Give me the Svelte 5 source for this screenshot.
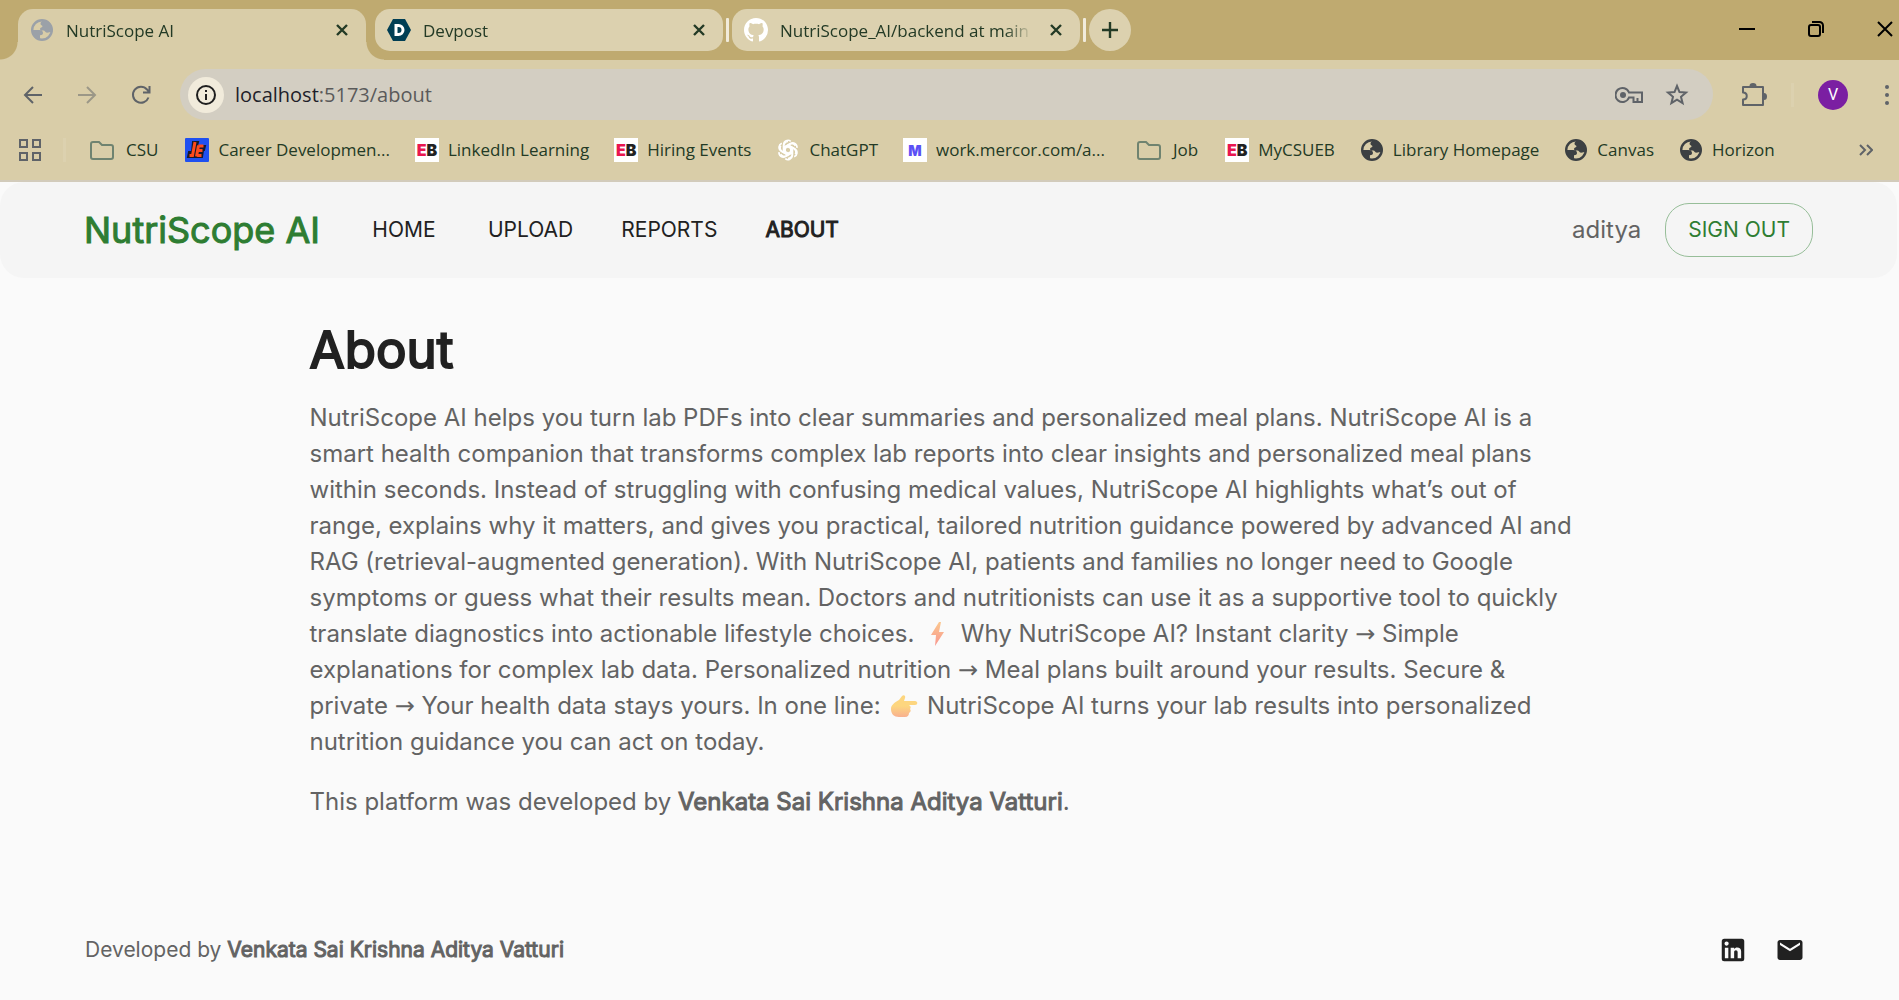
<script>
	const tabs = [
		{ title: 'NutriScope AI', icon: 'globe', active: true },
		{ title: 'Devpost', icon: 'devpost' },
		{ title: 'NutriScope_AI/backend at main', icon: 'github' }
	];

	const bookmarks = [
		{ label: 'CSU', icon: 'folder' },
		{ label: 'Career Developmen...', icon: 'career' },
		{ label: 'LinkedIn Learning', icon: 'eb' },
		{ label: 'Hiring Events', icon: 'eb' },
		{ label: 'ChatGPT', icon: 'chatgpt' },
		{ label: 'work.mercor.com/a...', icon: 'mercor' },
		{ label: 'Job', icon: 'folder' },
		{ label: 'MyCSUEB', icon: 'eb' },
		{ label: 'Library Homepage', icon: 'globe' },
		{ label: 'Canvas', icon: 'globe' },
		{ label: 'Horizon', icon: 'globe' }
	];

	const pages = ['Home', 'Upload', 'Reports', 'About'];
	const current = 'About';
	const author = 'Venkata Sai Krishna Aditya Vatturi';
</script>

{#snippet icon(name)}
	{#if name === 'globe'}
		<svg class="icon icon--globe" viewBox="0 0 24 24" aria-hidden="true">
			<circle cx="12" cy="12" r="9.8" fill="none" stroke="currentColor" stroke-width="2.4" />
			<path
				fill="currentColor"
				d="M14 2c-2 1-3.5 2-3.5 3.7 0 1.500 2 1.500 2 2.600 0 1.200-2.500 1-2.500 2.700 0 1.600 1.600 1.500 3.500 1.500 1.500 0 1.500 2.200 3.500 2.200 1.800 0 3-.7 5-.7C23 7 19.500 3 14 2zM2 12h7c2.500 0 4 1 4 3 0 1.800-1.300 2.200-3 2.200V21.500C5 20.500 2 17 2 12z"
			/>
		</svg>
	{:else if name === 'folder'}
		<svg class="icon icon--folder" viewBox="0 0 24 24" aria-hidden="true">
			<path
				d="M3 4h6l3 3h9a2 2 0 0 1 2 2v10a2 2 0 0 1-2 2H3a2 2 0 0 1-2-2V6a2 2 0 0 1 2-2z"
				fill="none"
				stroke="currentColor"
				stroke-width="2"
			/>
		</svg>
	{:else if name === 'devpost'}
		<svg class="icon" viewBox="0 0 24 24" aria-hidden="true">
			<path d="M6 1h12l6 11-6 11H6L0 12z" fill="#003e54" />
			<path d="M9 7.5v9h2.5a4.5 4.5 0 0 0 0-9z" fill="none" stroke="#fff" stroke-width="3" />
		</svg>
	{:else if name === 'github'}
		<svg class="icon" viewBox="0 0 16 16" aria-hidden="true">
			<path
				fill="#fff"
				d="M8 0C3.58 0 0 3.58 0 8c0 3.54 2.29 6.53 5.47 7.59.4.07.55-.17.55-.38 0-.19-.01-.82-.01-1.49-2.01.37-2.53-.49-2.69-.94-.09-.23-.48-.94-.82-1.13-.28-.15-.68-.52-.01-.53.63-.01 1.08.58 1.23.82.72 1.21 1.87.87 2.33.66.07-.52.28-.87.51-1.07-1.78-.2-3.64-.89-3.64-3.95 0-.87.31-1.59.82-2.15-.08-.2-.36-1.02.08-2.12 0 0 .67-.21 2.2.82.64-.18 1.32-.27 2-.27s1.36.09 2 .27c1.53-1.04 2.2-.82 2.2-.82.44 1.1.16 1.92.08 2.12.51.56.82 1.27.82 2.15 0 3.07-1.87 3.75-3.65 3.95.29.25.54.73.54 1.48 0 1.07-.01 1.93-.01 2.2 0 .21.15.46.55.38A8.01 8.01 0 0 0 16 8c0-4.42-3.58-8-8-8z"
			/>
		</svg>
	{:else if name === 'career'}
		<svg class="icon" viewBox="0 0 24 24" aria-hidden="true">
			<rect width="24" height="24" rx="1" fill="#1f50f0" />
			<path
				d="M8 4h5l-1 4h8l-1 4h-1l-1 7H3l1-5h3z"
				fill="#171a2b"
				stroke="#171a2b"
				stroke-width="2"
			/>
			<path
				d="M10 4 7.5 17.5H4.500M13.500 7.5 11.500 18.500M13.500 8h5M12.500 12.500h5M12 17.500h4.500"
				fill="none"
				stroke="#ff4a1c"
				stroke-width="3"
			/>
		</svg>
	{:else if name === 'eb'}
		<span class="icon eb" aria-hidden="true"><span class="eb__e">E</span>B</span>
	{:else if name === 'chatgpt'}
		<svg class="icon" viewBox="1 1 22 22" aria-hidden="true">
			<g fill="none" stroke="#fff" stroke-width="1.5">
				{#each [0, 60, 120, 180, 240, 300] as turn}
					<path
						d="M12 9 16 11.3V17a4 4 0 0 1-6.5 3M8.5 10l4-2.3 4.7 2.7a4 4 0 0 1 1.5 5.5"
						transform="rotate({turn} 12 12)"
					/>
				{/each}
			</g>
		</svg>
	{:else if name === 'mercor'}
		<span class="icon mercor" aria-hidden="true">M</span>
	{/if}
{/snippet}

<div class="browser">
	<div class="tabstrip">
		{#each tabs as tab}
			<div class="tab" class:tab--active={tab.active}>
				{@render icon(tab.icon)}
				<span class="tab__title">{tab.title}</span>
				<button class="tab__close" type="button" aria-label="Close {tab.title}">
					<svg viewBox="0 0 14 14" width="14" height="14" aria-hidden="true">
						<path d="m2 2 10 10M12 2 2 12" stroke="currentColor" stroke-width="2.4" />
					</svg>
				</button>
			</div>
			{#if !tab.active}<span class="tab-divider"></span>{/if}
		{/each}
		<button class="new-tab" type="button" aria-label="New tab">
			<svg viewBox="0 0 16 16" width="16" height="16" aria-hidden="true">
				<path d="M8 0v16M0 8h16" stroke="currentColor" stroke-width="2.4" />
			</svg>
		</button>
		<div class="window-controls">
			<button type="button" aria-label="Minimize">
				<svg viewBox="0 0 16 16" aria-hidden="true"><path d="M0 8h16" /></svg>
			</button>
			<button type="button" aria-label="Restore">
				<svg viewBox="0 0 16 16" aria-hidden="true">
					<rect x="1" y="4" width="11" height="11" rx="2" />
					<path d="M4 1h7.5A3.5 3.5 0 0 1 15 4.5V12" />
				</svg>
			</button>
			<button type="button" aria-label="Close">
				<svg viewBox="0 0 16 16" aria-hidden="true"><path d="m1 1 14 14M15 1 1 15" /></svg>
			</button>
		</div>
	</div>

	<div class="toolbar">
		<button class="tool" type="button" aria-label="Back">
			<svg viewBox="0 0 24 24" aria-hidden="true">
				<path d="M21 12H5M12 4l-8 8 8 8" />
			</svg>
		</button>
		<button class="tool tool--disabled" type="button" aria-label="Forward" disabled>
			<svg viewBox="0 0 24 24" aria-hidden="true">
				<path d="M3 12h16M12 4l8 8-8 8" />
			</svg>
		</button>
		<button class="tool" type="button" aria-label="Reload">
			<svg viewBox="0 0 24 24" aria-hidden="true">
				<path d="M19.5 14.5A8 8 0 1 1 18 6.5l2 2.5M20.5 3v6.5H14" />
			</svg>
		</button>
		<div class="omnibox">
			<button class="site-info" type="button" aria-label="View site information">
				<svg viewBox="0 0 22 22" width="22" height="22" aria-hidden="true">
					<circle cx="11" cy="11" r="9" fill="none" stroke="currentColor" stroke-width="2" />
					<path d="M11 10v6M11 6v2" stroke="currentColor" stroke-width="2" />
				</svg>
			</button>
			<span class="url"><span class="url__host">localhost</span>:5173/about</span>
			<button class="tool" type="button" aria-label="Manage passwords">
				<svg class="key" viewBox="0 0 28 18" aria-hidden="true">
					<path d="M14 6.5A7 7 0 1 0 14 11.5h4.5V16H27V6.5z" />
					<path d="M22.5 16v-4" />
					<circle cx="8" cy="9" r="3" fill="currentColor" stroke="none" />
				</svg>
			</button>
			<button class="tool" type="button" aria-label="Bookmark this tab">
				<svg viewBox="0 0 24 24" aria-hidden="true">
					<path
						d="m12 3 2.5 6.1 6.5.5-5 4.2 1.6 6.4L12 16.7l-5.6 3.5L8 13.8 3 9.6l6.5-.5z"
					/>
				</svg>
			</button>
		</div>
		<button class="tool tool--extensions" type="button" aria-label="Extensions">
			<svg viewBox="0 0 26 26" aria-hidden="true">
				<path d="M2 5h20v18H2v-5.5c5 0 5-7 0-7z" stroke-linejoin="round" />
				<path
					d="M8.5 4a3.5 3 0 0 1 7 0zM23 11a3 3.5 0 0 1 0 7z"
					fill="currentColor"
					stroke="none"
				/>
			</svg>
		</button>
		<span class="toolbar__divider"></span>
		<button class="avatar" type="button">V</button>
		<button class="menu" type="button" aria-label="Menu">
			<svg viewBox="0 0 6 22" width="6" height="22" aria-hidden="true">
				<circle cx="3" cy="3" r="2" /><circle cx="3" cy="11" r="2" /><circle cx="3" cy="19" r="2" />
			</svg>
		</button>
	</div>

	<nav class="bookmarks" aria-label="Bookmarks">
		<button class="apps" type="button" aria-label="Apps">
			<svg viewBox="0 0 22 22" width="22" height="22" aria-hidden="true">
				<path d="M1 1h7v7H1zM14 1h7v7h-7zM1 14h7v7H1zM14 14h7v7h-7z" />
			</svg>
		</button>
		<span class="bookmarks__divider"></span>
		{#each bookmarks as bookmark}
			<a class="bookmark" class:bookmark--folder={bookmark.icon === 'folder'} href="#bookmark">
				{@render icon(bookmark.icon)}
				<span class="bookmark__label">{bookmark.label}</span>
			</a>
		{/each}
		<button class="more" type="button" aria-label="More bookmarks">
			<svg viewBox="0 0 14 12" width="14" height="12" aria-hidden="true">
				<path d="m1 1 5 5-5 5M8 1l5 5-5 5" />
			</svg>
		</button>
	</nav>
</div>

<div class="page">
	<header class="appbar">
		<a class="logo" href="#home">NutriScope AI</a>
		<nav class="links" aria-label="Main">
			{#each pages as page}
				<a
					href="#{page.toLowerCase()}"
					class:strong={page === current}
					aria-current={page === current ? 'page' : undefined}>{page.toUpperCase()}</a
				>
			{/each}
		</nav>
		<span class="user">aditya</span>
		<button class="sign-out" type="button">SIGN OUT</button>
	</header>

	<main class="about">
		<h1>About</h1>
		<p>
			NutriScope AI helps you turn lab PDFs into clear summaries and personalized meal plans.
			NutriScope AI is a smart health companion that transforms complex lab reports into clear
			insights and personalized meal plans within seconds. Instead of struggling with confusing
			medical values, NutriScope AI highlights what’s out of range, explains why it matters, and
			gives you practical, tailored nutrition guidance powered by advanced AI and RAG
			(retrieval-augmented generation). With NutriScope AI, patients and families no longer need to
			Google symptoms or guess what their results mean. Doctors and nutritionists can use it as a
			supportive tool to quickly translate diagnostics into actionable lifestyle choices.
			<svg class="emoji" viewBox="0 0 33 28" role="img" aria-label="High voltage">
				<defs>
					<linearGradient id="bolt" x1="0" y1="0" x2="0" y2="1">
						<stop offset="0" stop-color="#fbc88f" />
						<stop offset="1" stop-color="#f8968f" />
					</linearGradient>
				</defs>
				<path d="m18 2-8 13h5l-1 11 9-14h-5l2-10z" fill="url(#bolt)" />
			</svg>
			Why NutriScope AI? Instant clarity <span class="arrow">→</span> Simple explanations for complex
			lab data. Personalized nutrition <span class="arrow">→</span> Meal plans built around your
			results. Secure &amp; private <span class="arrow">→</span> Your health data stays yours. In one
			line:
			<svg class="emoji" viewBox="0 0 33 28" role="img" aria-label="Pointing right">
				<defs>
					<linearGradient id="hand" x1="0" y1="0" x2="0" y2="1">
						<stop offset="0.5" stop-color="#fdd67f" />
						<stop offset="1" stop-color="#f8b08f" />
					</linearGradient>
				</defs>
				<path
					d="M12 8 15 4c2-2 4 0 3 2l-1 3h11c3 0 3 4 0 4h-6c2 1 2 3 1 4 1 1 1 3-1 4 0 2-1 4-4 4h-6c-5 0-8-3-8-8 0-4 3-6 8-9z"
					fill="url(#hand)"
				/>
			</svg>
			NutriScope AI turns your lab results into personalized nutrition guidance you can act on today.
		</p>
		<p>This platform was developed by <span class="strong">{author}</span>.</p>
	</main>

	<footer class="footer">
		<p>Developed by <span class="strong">{author}</span></p>
		<a href="#linkedin" aria-label="LinkedIn">
			<svg viewBox="0 0 24 24" aria-hidden="true">
				<path
					d="M19 3a2 2 0 0 1 2 2v14a2 2 0 0 1-2 2H5a2 2 0 0 1-2-2V5a2 2 0 0 1 2-2h14m-.5 15.5v-5.3a3.26 3.26 0 0 0-3.26-3.26c-.85 0-1.84.52-2.32 1.3v-1.11h-2.79v8.37h2.79v-4.93c0-.77.62-1.4 1.39-1.4a1.4 1.4 0 0 1 1.4 1.4v4.93h2.79M6.88 8.56a1.68 1.68 0 0 0 1.68-1.68c0-.93-.75-1.69-1.68-1.69a1.69 1.69 0 0 0-1.69 1.69c0 .93.76 1.68 1.69 1.68m1.39 9.94v-8.37H5.5v8.37h2.77z"
				/>
			</svg>
		</a>
		<a href="#email" aria-label="Email">
			<svg viewBox="0 0 24 24" aria-hidden="true">
				<path
					d="M20 4H4c-1.1 0-1.99.9-1.99 2L2 18c0 1.1.9 2 2 2h16c1.1 0 2-.9 2-2V6c0-1.1-.9-2-2-2zm0 4-8 5-8-5V6l8 5 8-5v2z"
				/>
			</svg>
		</a>
	</footer>
</div>

<style>
	:global(body) {
		margin: 0;
		background: #fafafa;
	}

	button {
		display: inline-flex;
		align-items: center;
		justify-content: center;
		padding: 0;
		border: 0;
		background: none;
		color: inherit;
		font: inherit;
		cursor: pointer;
	}

	a {
		color: inherit;
		text-decoration: none;
	}

	.browser {
		background: #d9cda8;
		border-bottom: 2px solid #d2cbbb;
		color: #233a25;
		font-family: 'Open Sans', 'Noto Sans', sans-serif;
		font-size: 17px;
	}

	.icon {
		flex: none;
		width: 24px;
		height: 24px;
	}

	/* Tab strip */
	.tabstrip {
		display: flex;
		align-items: flex-start;
		height: 51px;
		padding: 9px 0 0 18px;
		background: #bfaa70;
	}

	.tab {
		display: flex;
		align-items: center;
		box-sizing: border-box;
		width: 348px;
		height: 42px;
		padding: 0 12px;
		border-radius: 15px;
		background: #dcd1af;
	}

	.tab--active {
		position: relative;
		height: 51px;
		margin-right: 9px;
		padding-bottom: 9px;
		border-radius: 15px 15px 0 0;
		background: #d9cda8;
	}

	.tab--active::before,
	.tab--active::after {
		content: '';
		position: absolute;
		bottom: 0;
		width: 18px;
		height: 18px;
	}

	.tab--active::before {
		right: 100%;
		background: radial-gradient(circle at 0 0, transparent 17px, #d9cda8 18px);
	}

	.tab--active::after {
		left: 100%;
		background: radial-gradient(circle at 100% 0, transparent 17px, #d9cda8 18px);
	}

	.tab--active .icon {
		color: #9ba1a8;
	}

	.tab__title {
		flex: 1;
		margin: 0 12px;
		overflow: hidden;
		white-space: nowrap;
		mask-image: linear-gradient(to right, #000 225px, transparent 252px);
	}

	.tab__close {
		width: 24px;
		height: 24px;
	}

	.tab-divider {
		width: 3px;
		height: 24px;
		margin: 9px 3px;
		border-radius: 1px;
		background: #f1ebdb;
	}

	.new-tab {
		width: 42px;
		height: 42px;
		border-radius: 50%;
		background: #dcd1af;
	}

	.window-controls {
		display: flex;
		gap: 53px;
		margin: 12px 6px 0 auto;
		color: #000;
	}

	.window-controls svg {
		width: 16px;
		height: 16px;
		fill: none;
		stroke: currentColor;
		stroke-width: 2;
	}

	/* Toolbar */
	.toolbar {
		display: flex;
		align-items: center;
		padding: 9px 9px 0 18px;
		color: #5f6368;
	}

	.tool {
		width: 30px;
		height: 30px;
		margin-right: 24px;
	}

	.tool svg {
		width: 24px;
		height: 24px;
		fill: none;
		stroke: currentColor;
		stroke-width: 2;
	}

	.tool .key {
		width: 28px;
		height: 18px;
	}

	.tool--disabled {
		opacity: 0.5;
	}

	.omnibox {
		display: flex;
		flex: 1;
		align-items: center;
		height: 51px;
		padding-left: 8px;
		border-radius: 26px;
		background: #d3cec2;
	}

	.omnibox .tool {
		margin-right: 18px;
	}

	.omnibox .tool:last-child {
		margin-right: 21px;
	}

	.site-info {
		width: 36px;
		height: 36px;
		border-radius: 50%;
		background: #f1ebdb;
		color: #1f1f1f;
	}

	.url {
		flex: 1;
		margin-left: 11px;
		color: #5a5a5a;
		font-size: 20px;
	}

	.url__host {
		color: #1f1f2a;
	}

	.tool--extensions {
		margin: 0 22px 0 26px;
	}

	.tool--extensions svg {
		width: 26px;
		height: 26px;
	}

	.toolbar__divider,
	.bookmarks__divider {
		width: 3px;
		height: 24px;
		background: #dcd1af;
	}

	.avatar {
		width: 30px;
		height: 30px;
		margin: 0 36px 0 24px;
		border-radius: 50%;
		background: #7b1fa2;
		color: #fff;
		font-family: Roboto, sans-serif;
		font-size: 16px;
	}

	.menu svg {
		fill: currentColor;
	}

	/* Bookmarks bar */
	.bookmarks {
		display: flex;
		align-items: center;
		height: 60px;
		padding: 0 26px 0 19px;
	}

	.apps svg,
	.more svg {
		fill: none;
		stroke: #5f6368;
		stroke-width: 2;
	}

	.bookmarks__divider {
		margin: 0 17px 0 22px;
	}

	.bookmark {
		display: flex;
		align-items: center;
		gap: 9px;
		margin-right: 25px;
		white-space: nowrap;
	}

	.bookmark--folder {
		gap: 12px;
		margin: 0 27px 0 7px;
	}

	.bookmark__label {
		padding-bottom: 2px;
	}

	.icon--folder {
		color: #6f8370;
	}

	.bookmark .icon--globe {
		color: #3c4043;
	}

	.eb,
	.mercor {
		display: flex;
		align-items: center;
		justify-content: center;
		background: #fff;
		color: #222;
		font-family: Inter, sans-serif;
		font-size: 16px;
		font-weight: 900;
	}

	.eb__e {
		color: #e9164f;
	}

	.mercor {
		color: #5b50f5;
		font-size: 14px;
	}

	.more {
		margin-left: auto;
	}

	/* Application */
	.page {
		padding-right: 2px;
		color: #212121;
		font-family: Inter, sans-serif;
		font-size: 24px;
		font-optical-sizing: none;
		line-height: 36px;
	}

	.page p {
		margin: 0 0 24px;
		color: #636363;
	}

	/* Heavier text that keeps the regular cut's widths */
	.strong {
		-webkit-text-stroke: 1px currentColor;
	}

	.appbar {
		display: flex;
		align-items: center;
		height: 96px;
		padding: 0 84px;
		border-radius: 24px;
		background: #f5f5f5;
	}

	.logo {
		margin-right: 36px;
		color: #2e7d32;
		font-size: 36px;
		-webkit-text-stroke: 1px currentColor;
	}

	.links {
		display: flex;
		flex: 1;
		gap: 24px;
		font-size: 21px;
	}

	.links a {
		box-sizing: border-box;
		min-width: 96px;
		padding: 0 12px;
		text-align: center;
	}

	.user {
		margin-right: 24px;
		color: #636363;
	}

	.sign-out {
		height: 54px;
		padding: 0 22px;
		border: 1px solid #97be99;
		border-radius: 24px;
		color: #2e7d32;
		font-size: 21px;
	}

	.about {
		box-sizing: border-box;
		max-width: 1350px;
		margin: 0 auto;
		padding: 36px 36px 0;
	}

	h1 {
		margin: 0 0 14px;
		font-size: 51px;
		font-weight: 400;
		line-height: 72px;
		-webkit-text-stroke: 2px currentColor;
	}

	.emoji {
		width: 33px;
		height: 28px;
		vertical-align: -6px;
	}

	.arrow {
		font-family: 'DejaVu Sans', sans-serif;
		line-height: 1;
	}

	.footer {
		display: flex;
		align-items: center;
		margin-top: 64px;
		padding: 48px 92px 28px 85px;
	}

	.page .footer p {
		flex: 1;
		margin: 0;
		font-size: 21px;
	}

	.footer a {
		display: flex;
		margin-left: 27px;
	}

	.footer svg {
		width: 30px;
		height: 30px;
		fill: currentColor;
	}
</style>
